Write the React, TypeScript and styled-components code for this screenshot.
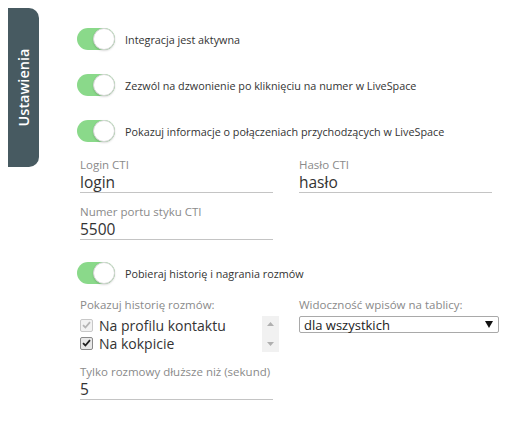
import React from "react";
import styled, { createGlobalStyle } from "styled-components";

const GlobalStyle = createGlobalStyle`
  body {
    margin: 8px;
    background: #ffffff;
    font-family: "Open Sans", "Noto Sans", sans-serif;
    color: #333;
  }
`;

const Page = styled.div`
  display: flex;
  align-items: flex-start;
`;

const SideTab = styled.div`
  width: 31px;
  height: 159px;
  background: #475a61;
  border-radius: 0 10px 10px 0;
  display: flex;
  align-items: center;
  justify-content: center;
  flex-shrink: 0;
`;

const TabLabel = styled.span`
  color: #fff;
  font-size: 14.5px;
  font-weight: 600;
  transform: rotate(-90deg);
  white-space: nowrap;
`;

const Content = styled.div`
  margin-left: 38px;
  padding-top: 20px;
  display: flex;
  flex-direction: column;
  width: 422px;
`;

const ToggleRow = styled.div<{ $mt?: number }>`
  display: flex;
  align-items: center;
  gap: 10px;
  margin-top: ${(p) => p.$mt ?? 0}px;
`;

const Track = styled.span`
  position: relative;
  width: 38px;
  height: 22px;
  border-radius: 11px;
  background: #8ad98a;
  flex-shrink: 0;
`;

const Knob = styled.span`
  position: absolute;
  top: 0;
  right: 0;
  width: 20px;
  height: 20px;
  border-radius: 50%;
  background: #fff;
  border: 1px solid #d6d6d6;
  box-shadow: 0 1px 2px rgba(0, 0, 0, 0.15);
`;

const ToggleText = styled.span`
  font-size: 10.8px;
  color: #333;
`;

const Row = styled.div<{ $mt?: number }>`
  display: grid;
  grid-template-columns: 193px 200px;
  column-gap: 26px;
  padding-left: 3px;
  margin-top: ${(p) => p.$mt ?? 0}px;
  align-items: start;
`;

const Field = styled.div`
  display: flex;
  flex-direction: column;
  width: 193px;
  border-bottom: 1px solid #c4c4c4;
`;

const Label = styled.span`
  font-size: 11.5px;
  line-height: 14px;
  color: #8a8a8a;
`;

const Value = styled.span`
  font-size: 15.5px;
  line-height: 20px;
  color: #333;
`;

const Group = styled.div`
  display: flex;
  flex-direction: column;
`;

const ListBox = styled.div`
  display: flex;
  width: 199px;
  height: 36px;
  margin-top: 4px;
`;

const Options = styled.div`
  flex: 1;
  display: flex;
  flex-direction: column;
`;

const Option = styled.label`
  display: flex;
  align-items: center;
  gap: 4px;
  height: 18px;
  font-size: 14px;
  color: #333;
`;

const Box = styled.span<{ $disabled?: boolean }>`
  width: 11px;
  height: 11px;
  border: 1px solid ${(p) => (p.$disabled ? "#c8c8c8" : "#8a8a8a")};
  border-radius: 2px;
  background: ${(p) => (p.$disabled ? "#f2f2f2" : "#e8e8e8")};
  display: flex;
  align-items: center;
  justify-content: center;
  margin-right: 2px;
`;

const Scrollbar = styled.div`
  width: 17px;
  background: #f1f1f1;
  display: flex;
  flex-direction: column;
  align-items: center;
  justify-content: space-between;
  padding: 6px 0;
  box-sizing: border-box;
`;

const Select = styled.div`
  margin-top: 4px;
  height: 17px;
  box-sizing: border-box;
  border: 1px solid #a9a9a9;
  border-radius: 2px;
  display: flex;
  align-items: center;
  justify-content: space-between;
  padding: 0 5px 0 4px;
  font-size: 13px;
  color: #222;
`;

const Check = ({ color }: { color: string }) => (
  <svg width="9" height="8" viewBox="0 0 9 8">
    <path d="M1 4.2 L3.4 6.5 L8 1.2" stroke={color} strokeWidth="1.8" fill="none" />
  </svg>
);

const Toggle = ({ text, mt }: { text: string; mt?: number }) => (
  <ToggleRow $mt={mt}>
    <Track>
      <Knob />
    </Track>
    <ToggleText>{text}</ToggleText>
  </ToggleRow>
);

export default function App() {
  return (
    <Page>
      <GlobalStyle />
      <SideTab>
        <TabLabel>Ustawienia</TabLabel>
      </SideTab>
      <Content>
        <Toggle text="Integracja jest aktywna" />
        <Toggle text="Zezwól na dzwonienie po kliknięciu na numer w LiveSpace" mt={24} />
        <Toggle text="Pokazuj informacje o połączeniach przychodzących w LiveSpace" mt={24} />

        <Row $mt={16}>
          <Field>
            <Label>Login CTI</Label>
            <Value>login</Value>
          </Field>
          <Field>
            <Label>Hasło CTI</Label>
            <Value>hasło</Value>
          </Field>
        </Row>
        <Row $mt={12}>
          <Field>
            <Label>Numer portu styku CTI</Label>
            <Value>5500</Value>
          </Field>
        </Row>

        <Toggle text="Pobieraj historię i nagrania rozmów" mt={22} />

        <Row $mt={14}>
          <Group>
            <Label>Pokazuj historię rozmów:</Label>
            <ListBox>
              <Options>
                <Option>
                  <Box $disabled>
                    <Check color="#b5b5b5" />
                  </Box>
                  Na profilu kontaktu
                </Option>
                <Option>
                  <Box>
                    <Check color="#222" />
                  </Box>
                  Na kokpicie
                </Option>
              </Options>
              <Scrollbar>
                <svg width="7" height="4" viewBox="0 0 7 4">
                  <path d="M0 4 L3.5 0 L7 4 Z" fill="#b0b0b0" />
                </svg>
                <svg width="7" height="4" viewBox="0 0 7 4">
                  <path d="M0 0 L3.5 4 L7 0 Z" fill="#b0b0b0" />
                </svg>
              </Scrollbar>
            </ListBox>
          </Group>
          <Group>
            <Label>Widoczność wpisów na tablicy:</Label>
            <Select>
              <span>dla wszystkich</span>
              <svg width="8" height="7" viewBox="0 0 8 7">
                <path d="M0 0 L8 0 L4 7 Z" fill="#111" />
              </svg>
            </Select>
          </Group>
        </Row>

        <Row $mt={13}>
          <Field>
            <Label>Tylko rozmowy dłuższe niż (sekund)</Label>
            <Value>5</Value>
          </Field>
        </Row>
      </Content>
    </Page>
  );
}
